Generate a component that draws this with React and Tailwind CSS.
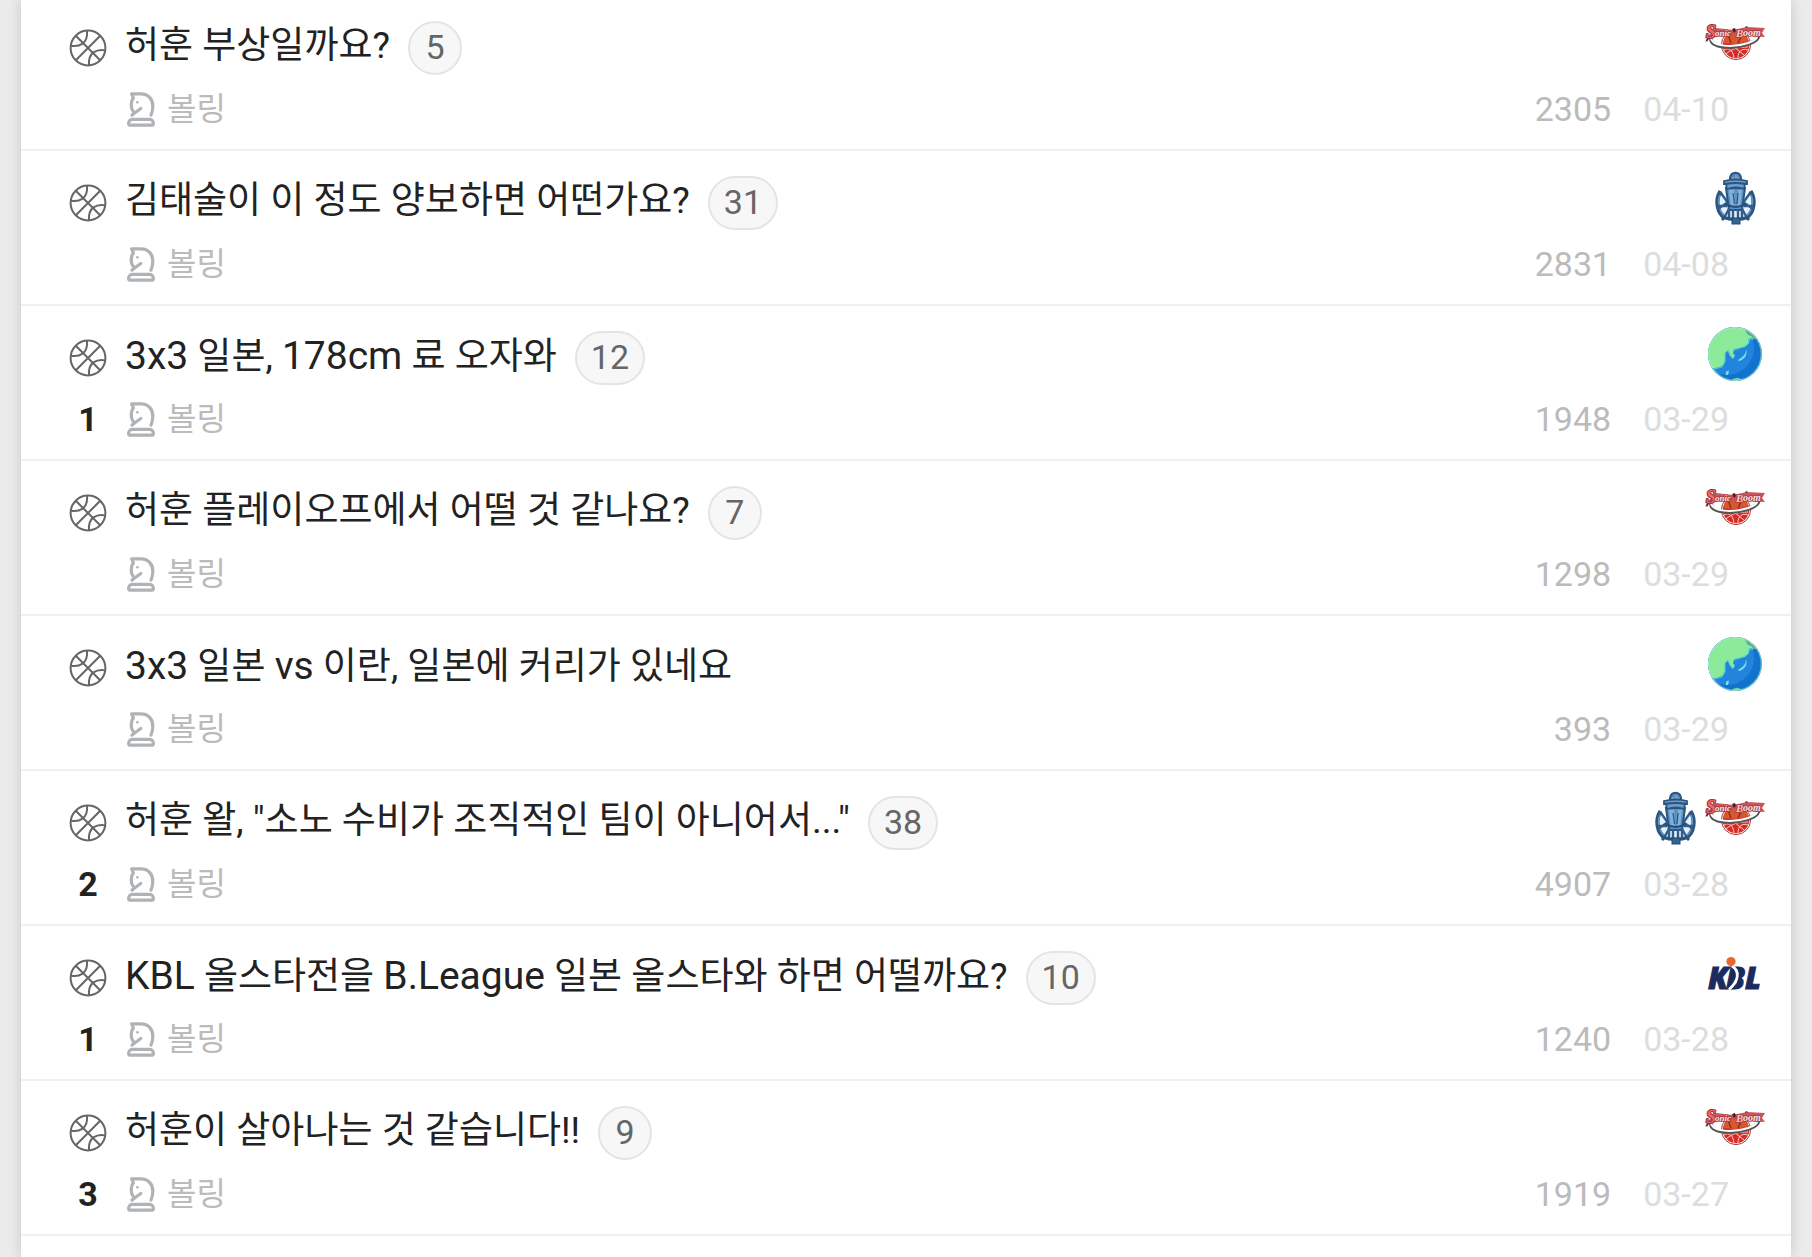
const POSTS = [
  { title: '허훈 부상일까요?', comments: 5, votes: null, views: 2305, date: '04-10', logos: ['sonic'] },
  { title: '김태술이 이 정도 양보하면 어떤가요?', comments: 31, votes: null, views: 2831, date: '04-08', logos: ['sono'] },
  { title: '3x3 일본, 178cm 료 오자와', comments: 12, votes: 1, views: 1948, date: '03-29', logos: ['earth'] },
  { title: '허훈 플레이오프에서 어떨 것 같나요?', comments: 7, votes: null, views: 1298, date: '03-29', logos: ['sonic'] },
  { title: '3x3 일본 vs 이란, 일본에 커리가 있네요', comments: null, votes: null, views: 393, date: '03-29', logos: ['earth'] },
  { title: '허훈 왈, "소노 수비가 조직적인 팀이 아니어서..."', comments: 38, votes: 2, views: 4907, date: '03-28', logos: ['sono', 'sonic'] },
  { title: 'KBL 올스타전을 B.League 일본 올스타와 하면 어떨까요?', comments: 10, votes: 1, views: 1240, date: '03-28', logos: ['kbl'] },
  { title: '허훈이 살아나는 것 같습니다!!', comments: 9, votes: 3, views: 1919, date: '03-27', logos: ['sonic'] },
];

function Basketball() {
  return (
    <svg viewBox="0 0 38 38" className="size-[38px]" fill="none" stroke="#666" strokeWidth="2" aria-hidden="true">
      <circle cx="19" cy="19" r="17.4" />
      <path d="M6.8 31.2 31.2 6.8M6.8 6.8 31.2 31.2" />
      <path d="M18 1.6C18.6 8 17 12 13.6 14.6 10 17 6 17.6 1.8 16.6" />
      <path d="M20 36.4C19.4 30 21 26 24.4 23.4 28 21 32 20.4 36.2 21.4" />
    </svg>
  );
}

function Knight() {
  return (
    <svg viewBox="0 0 28 35" className="h-[35px] w-7" fill="none" stroke="#b0b3b6" strokeWidth="3.2" strokeLinecap="round" strokeLinejoin="round" aria-hidden="true">
      <path d="M5 23.2 7.6 20.7C3.6 17.5 4 11.7 5 8.3L6.4 5.9 4.6 1.9H14C21.6 1.9 26 7.7 25.8 14.5 25.7 18.1 25 20.7 24 23.2" />
      <path d="M6.6 21.7 13.8 16.5" />
      <path d="M5.2 27.4H22.8C25 27.4 26.4 29.6 26.4 31.4 26.4 32.6 25.6 33.2 24.4 33.2H3.6C2.4 33.2 1.6 32.6 1.6 31.4 1.6 29.6 3 27.4 5.2 27.4Z" />
      <circle cx="10.4" cy="10.2" r="1.3" fill="#b0b3b6" stroke="none" />
    </svg>
  );
}

function SonicLogo() {
  return (
    <svg viewBox="0 0 60 60" className="size-[60px] overflow-visible" role="img" aria-label="소닉붐">
      <circle cx="31" cy="31" r="14.6" fill="#fff" stroke="#a33a38" strokeWidth="1" />
      <circle cx="31" cy="31" r="13.2" fill="#d92b26" />
      <path d="M18.5 29C19 20 25 18 31 18.8S43 22 43.8 27L31 30Z" fill="#d8572c" />
      <path d="M23 21 26 29M37 21 33 29" stroke="#7c2a1c" strokeWidth="1.2" />
      <path d="M19 36C24 33 28 36 29 44M43 36C37 34 33 37 33 44M21 40C28 34 34 33 43 33M29 33 39 41" fill="none" stroke="#f9cfc8" strokeWidth="1" />
      <path d="M6 24C5 34 28 35 43 30 52 27 55 23 52 20" fill="none" stroke="#555" strokeWidth="3.8" />
      <path d="M6 23C6 33 28 34 43 29 51 26 54 23 51 20" fill="none" stroke="#fff" strokeWidth="2" />
      <path d="M11 14 28 16 42 13 60 14 57 19 60 23 46 22 36 24 29 20 15 22 6 24 0 28 3 22Z" fill="#c9545b" />
      <g fontFamily="Liberation Serif, serif" fontStyle="italic" fontWeight="700" paintOrder="stroke" strokeLinejoin="round">
        <text x="1" y="24" fontSize="18" fill="#ef666c" stroke="#963238" strokeWidth="2">S</text>
        <text x="10" y="22" fontSize="9" fill="#fae3e3" stroke="#a83a41" strokeWidth="1.6">onic</text>
        <text x="31" y="23" fontSize="11" fill="#f6c9ca" stroke="#a83a41" strokeWidth="1.6">B</text>
        <text x="38" y="22" fontSize="10" fill="#fae3e3" stroke="#a83a41" strokeWidth="1.6">oom</text>
      </g>
      <path d="M27 15 30 14 31 17 29 19ZM41 12 43 13 40 14ZM1 26 4 24 2 28Z" fill="#38242a" />
    </svg>
  );
}

function SonoLogo() {
  return (
    <svg viewBox="0 0 60 60" className="size-[60px]" fill="none" role="img" aria-label="소노">
      <path d="M16 24C10 32 12 44 20 49L27 51H35L42 49C50 44 52 32 46 24L41 30H21Z" fill="#e4f0fa" />
      <path d="M15.5 22C10 31 12 44 20 49M45.5 22C51 31 49 44 41 49" stroke="#2d5580" strokeWidth="4.2" />
      <path d="M15 26C12 33 14 42 20 47M46 26C49 33 47 42 41 47" stroke="#6496c4" strokeWidth="1.6" />
      <path d="M16 24 23 34M45 24 38 34M13 40 23 33M48 40 38 33M19 49 25 38M42 49 36 38M13 37H22M48 37H39" stroke="#315f8a" strokeWidth="2.4" />
      <path d="M21 19H40L37 41H24Z" fill="#5e91c2" stroke="#2b5480" strokeWidth="2" />
      <path d="M24 21H29L30 38H26ZM33 21H37L35 38H32Z" fill="#82b2dc" />
      <path d="M28 24 29.5 35M33 24 32 35" stroke="#285581" strokeWidth="1.2" />
      <path d="M20 35Q31 41 41 35" stroke="#254f79" strokeWidth="2.2" />
      <path d="M24 39V49M28 40V51M33 40V51M37 39V49" stroke="#315f8a" strokeWidth="2.4" />
      <path d="M17 48Q31 53 44 48M19 51 17 49M42 51 44 49" stroke="#2c557d" strokeWidth="3" />
      <rect x="27" y="49" width="8" height="6" fill="#33658f" stroke="#234870" />
      <path d="M25 13V9C26 2 35 2 36 9V13Z" fill="#5687b5" stroke="#2b5480" strokeWidth="2" />
      <path d="M28 13V8M31 13V6M33 13V8" stroke="#8bb7db" strokeWidth="1.2" />
      <path d="M19 12Q31 9 42 12V15Q31 13 19 15ZM21 15 22 20Q31 17 39 20L40 15Q31 13 21 15Z" fill="#6c9ecb" stroke="#2b5480" strokeWidth="1.8" />
    </svg>
  );
}

function EarthLogo() {
  return (
    <svg viewBox="0 0 60 60" className="size-[60px]" role="img" aria-label="해외">
      <defs>
        <clipPath id="globe"><circle cx="30" cy="30" r="27" /></clipPath>
      </defs>
      <g clipPath="url(#globe)">
        <rect width="60" height="60" fill="#1273cf" />
        <circle cx="22" cy="24" r="27" fill="#2284dc" />
        <path d="M0 0H40L45 10 50 12 49 15 45 14 44 19 40 23 34 24 29 25 28 30 30 31 28 35 25 32 23 27 20 29 20 37 17 42 11 44 0 45Z" fill="#8beb9b" />
        <path d="M38 3 48 8 54 15 49 15 46 12 43 11Z" fill="#5cab86" />
        <path d="M9 45 17 43 20 38 20 29 23 26 26 32 29 34M29 26 38 23 43 20 44 14 48 16" fill="none" stroke="#50d3d0" strokeWidth="1" />
        <path d="M33 36C38 33 41 30 41 25 43 31 39 36 34 37ZM21 51C20 48 22 46 24 47L23 51Z" fill="#72e3e6" />
        <path d="M26 57Q31 51 37 56L34 60H28Z" fill="#72cc9d" />
        <circle cx="30" cy="30" r="26.4" fill="none" stroke="#a5efd0" strokeWidth="1.4" opacity=".6" />
      </g>
    </svg>
  );
}

function KblLogo() {
  return (
    <svg viewBox="0 0 60 60" className="size-[60px]" role="img" aria-label="KBL">
      <g fontFamily="Open Sans, sans-serif" fontStyle="italic" fontWeight="800" fontSize="30" fill="#1c2b5e" stroke="#1c2b5e" strokeWidth="1">
        <text x="3" y="45">K</text>
        <text x="21" y="45">B</text>
        <text x="40" y="45">L</text>
      </g>
      <path d="M27 22C35 27 34 37 24 45.5" fill="none" stroke="#fff" strokeWidth="2.8" />
      <circle cx="26" cy="17.5" r="4.6" fill="#e8662f" />
    </svg>
  );
}

const LOGOS = { sonic: SonicLogo, sono: SonoLogo, earth: EarthLogo, kbl: KblLogo };

const LATIN_RUN = /([A-Za-z0-9][A-Za-z0-9.]*)/;

function Title({ children }) {
  return (
    <a href="#" className="pb-[4px] text-[37px] leading-[60px] whitespace-nowrap text-[#222]">
      {children.split(LATIN_RUN).map((run, i) =>
        i % 2 ? <span key={i} className="text-[39px]">{run}</span> : run
      )}
    </a>
  );
}

function PostRow({ post }) {
  return (
    <li className="flex h-[155px] border-b-2 border-[#f0f0f0] pt-[18px] pr-[26px] pl-12">
      <div className="w-14 shrink-0">
        <div className="flex h-[68px] w-[38px] items-center justify-center">
          <Basketball />
        </div>
        <div className="flex h-[54px] w-[38px] items-center justify-center text-[34px] font-bold text-[#222]">
          {post.votes}
        </div>
      </div>
      <div className="min-w-0 flex-1">
        <div className="flex h-[68px] items-center gap-[18px]">
          <Title>{post.title}</Title>
          {post.comments !== null && (
            <span className="flex h-[54px] min-w-[54px] items-center justify-center rounded-full border-2 border-[#e4e4e4] bg-[#f7f7f7] px-[14px] pb-[2px] text-[34px] leading-none text-[#666]">
              {post.comments}
            </span>
          )}
        </div>
        <a href="#" className="flex h-[54px] w-fit items-center gap-3 pl-[2px] text-[32px] leading-none text-[#bbb]">
          <Knight />
          <span>볼링</span>
        </a>
      </div>
      <div className="flex shrink-0 flex-col items-end">
        <div className="flex h-[68px] items-start">
          {post.logos.map((name) => {
            const Logo = LOGOS[name];
            return <Logo key={name} />;
          })}
        </div>
        <div className="flex h-[54px] items-center gap-8 pr-9 text-[34px] leading-none">
          <span className="text-[#bbb]">{post.views}</span>
          <time className="text-[#ddd]">{post.date}</time>
        </div>
      </div>
    </li>
  );
}

export default function App() {
  return (
    <div className="h-screen overflow-hidden bg-[#ebebeb] px-[21px] font-[Roboto,'Noto_Sans_CJK_KR',sans-serif]">
      <main className="flow-root min-h-screen bg-white shadow-[0_0_12px_rgba(0,0,0,0.16)]">
        <ul className="-mt-1">
          {POSTS.map((post) => (
            <PostRow key={post.title} post={post} />
          ))}
        </ul>
      </main>
    </div>
  );
}
